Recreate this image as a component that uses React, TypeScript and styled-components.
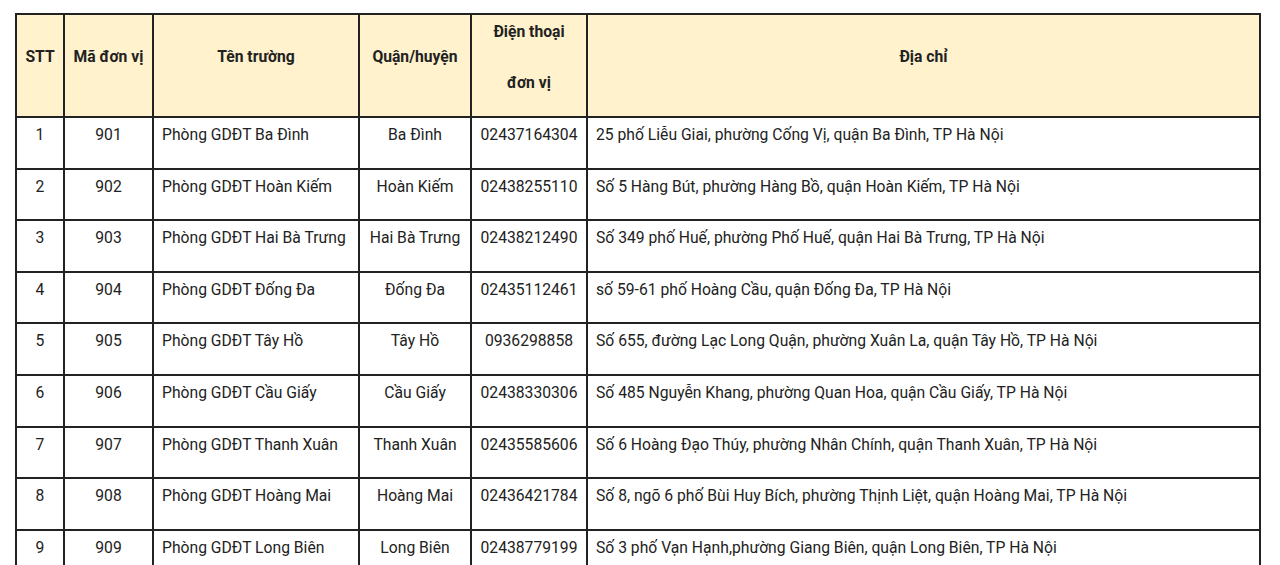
import styled, { createGlobalStyle } from 'styled-components';

const GlobalStyle = createGlobalStyle`
  body {
    margin: 0;
    background: #fff;
    font-family: Roboto, "Liberation Sans", sans-serif;
    color: #222;
  }
`;

const Page = styled.div`
  padding: 13px 19px 0 15px;
`;

const Table = styled.table`
  width: 100%;
  border-collapse: collapse;
  table-layout: fixed;
  border: 2px solid #222;
`;

const HeadCell = styled.th`
  background: #fff2cc;
  border: 2px solid #222;
  font-size: 15.7px;
  font-weight: 700;
  line-height: 20px;
  height: 84px;
  padding: 0 4px 17px;
  text-align: center;
  vertical-align: middle;
`;

const HeadLine = styled.div`
  & + & {
    margin-top: 31px;
  }
`;

const Cell = styled.td<{ $align?: 'left' | 'center' }>`
  border: 2px solid #222;
  font-size: 15.7px;
  line-height: 20px;
  height: 51.6px;
  box-sizing: border-box;
  padding: 7px 8px 0;
  vertical-align: top;
  text-align: ${(p) => p.$align ?? 'center'};
  white-space: nowrap;
  overflow: hidden;
`;

type Unit = {
  stt: number;
  code: string;
  name: string;
  district: string;
  phone: string;
  address: string;
};

const units: Unit[] = [
  { stt: 1, code: '901', name: 'Phòng GDĐT Ba Đình', district: 'Ba Đình', phone: '02437164304', address: '25 phố Liễu Giai, phường Cống Vị, quận Ba Đình, TP Hà Nội' },
  { stt: 2, code: '902', name: 'Phòng GDĐT Hoàn Kiếm', district: 'Hoàn Kiếm', phone: '02438255110', address: 'Số 5 Hàng Bút, phường Hàng Bồ, quận Hoàn Kiếm, TP Hà Nội' },
  { stt: 3, code: '903', name: 'Phòng GDĐT Hai Bà Trưng', district: 'Hai Bà Trưng', phone: '02438212490', address: 'Số 349 phố Huế, phường Phố Huế, quận Hai Bà Trưng, TP Hà Nội' },
  { stt: 4, code: '904', name: 'Phòng GDĐT Đống Đa', district: 'Đống Đa', phone: '02435112461', address: 'số 59-61 phố Hoàng Cầu, quận Đống Đa, TP Hà Nội' },
  { stt: 5, code: '905', name: 'Phòng GDĐT Tây Hồ', district: 'Tây Hồ', phone: '0936298858', address: 'Số 655, đường Lạc Long Quận, phường Xuân La, quận Tây Hồ, TP Hà Nội' },
  { stt: 6, code: '906', name: 'Phòng GDĐT Cầu Giấy', district: 'Cầu Giấy', phone: '02438330306', address: 'Số 485 Nguyễn Khang, phường Quan Hoa, quận Cầu Giấy, TP Hà Nội' },
  { stt: 7, code: '907', name: 'Phòng GDĐT Thanh Xuân', district: 'Thanh Xuân', phone: '02435585606', address: 'Số 6 Hoàng Đạo Thúy, phường Nhân Chính, quận Thanh Xuân, TP Hà Nội' },
  { stt: 8, code: '908', name: 'Phòng GDĐT Hoàng Mai', district: 'Hoàng Mai', phone: '02436421784', address: 'Số 8, ngõ 6 phố Bùi Huy Bích, phường Thịnh Liệt, quận Hoàng Mai, TP Hà Nội' },
  { stt: 9, code: '909', name: 'Phòng GDĐT Long Biên', district: 'Long Biên', phone: '02438779199', address: 'Số 3 phố Vạn Hạnh,phường Giang Biên, quận Long Biên, TP Hà Nội' },
];

export default function App() {
  return (
    <Page>
      <GlobalStyle />
      <Table>
        <colgroup>
          <col style={{ width: 48 }} />
          <col style={{ width: 89 }} />
          <col style={{ width: 206 }} />
          <col style={{ width: 112 }} />
          <col style={{ width: 116 }} />
          <col />
        </colgroup>
        <thead>
          <tr>
            <HeadCell>STT</HeadCell>
            <HeadCell>Mã đơn vị</HeadCell>
            <HeadCell>Tên trường</HeadCell>
            <HeadCell>Quận/huyện</HeadCell>
            <HeadCell>
              <HeadLine>Điện thoại</HeadLine>
              <HeadLine>đơn vị</HeadLine>
            </HeadCell>
            <HeadCell>Địa chỉ</HeadCell>
          </tr>
        </thead>
        <tbody>
          {units.map((u) => (
            <tr key={u.stt}>
              <Cell>{u.stt}</Cell>
              <Cell>{u.code}</Cell>
              <Cell $align="left">{u.name}</Cell>
              <Cell>{u.district}</Cell>
              <Cell>{u.phone}</Cell>
              <Cell $align="left">{u.address}</Cell>
            </tr>
          ))}
        </tbody>
      </Table>
    </Page>
  );
}
